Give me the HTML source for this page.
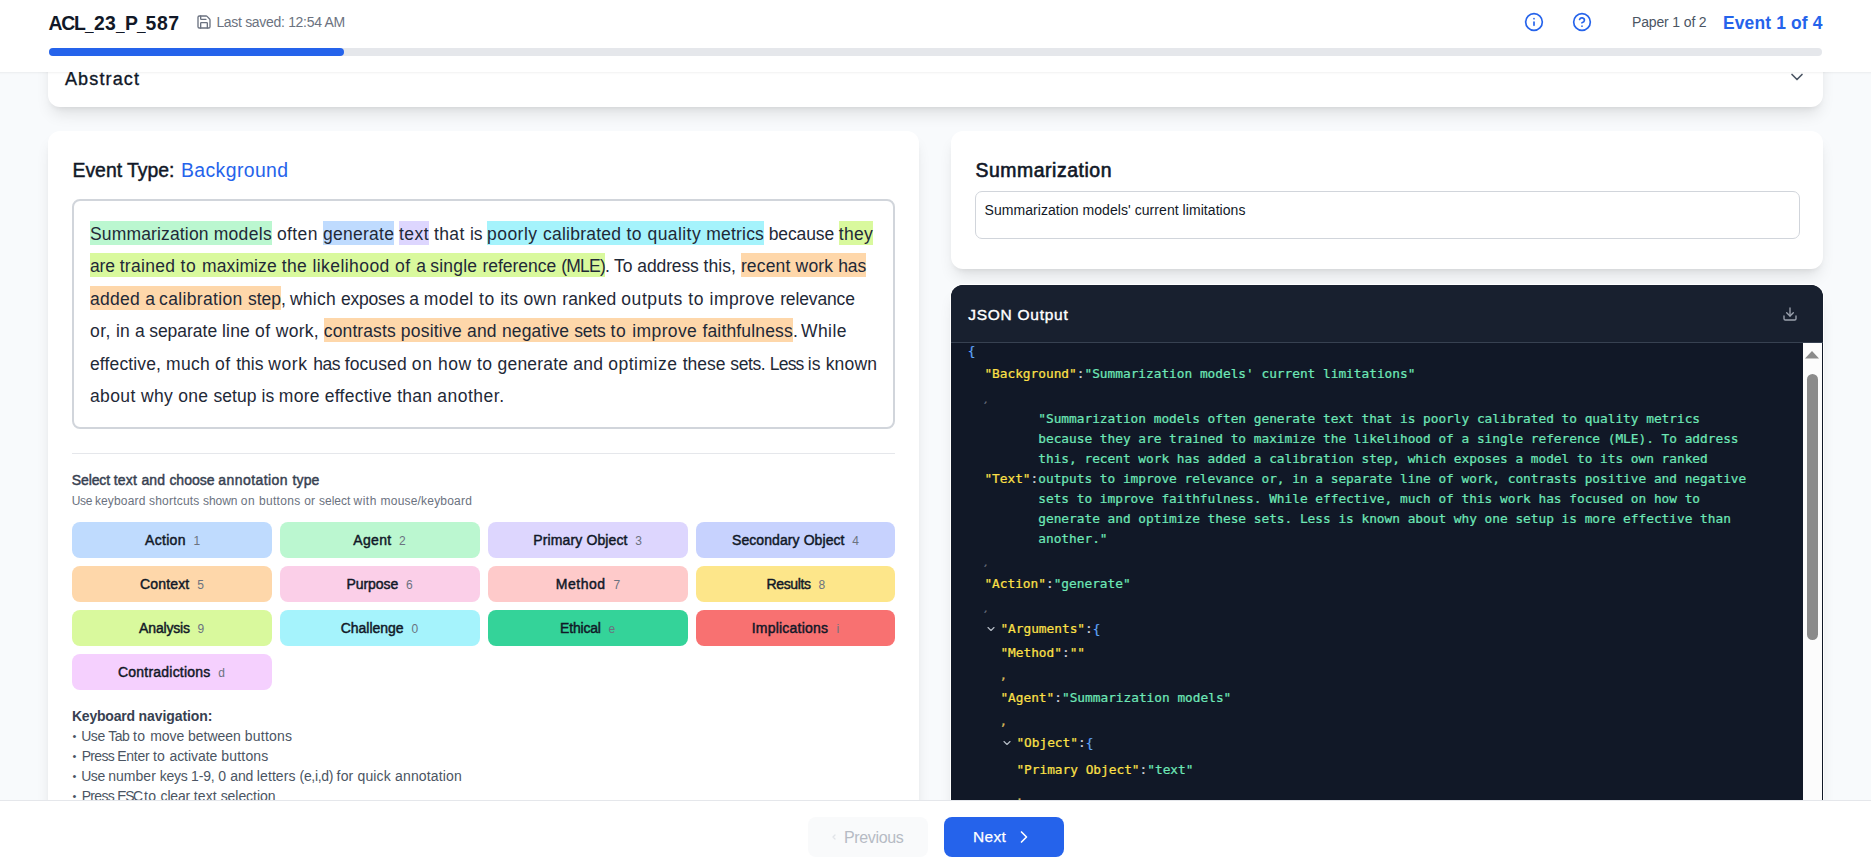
<!DOCTYPE html>
<html lang="en"><head><meta charset="utf-8"><title>Annotation</title><style>
html,body{margin:0;padding:0;overflow:hidden}
body{width:1871px;height:868px;overflow:hidden;background:#f8fafc;font-family:"Liberation Sans",sans-serif;position:relative;color:#111827}
.t{position:absolute;white-space:pre;line-height:1;display:block}
.m{font-family:"DejaVu Sans Mono","Liberation Mono",monospace;-webkit-text-stroke-width:0.22px}
.card{position:absolute;background:#fff;border-radius:12px;box-shadow:0 10px 15px -3px rgba(0,0,0,.1),0 4px 6px -4px rgba(0,0,0,.1)}
.abs{position:absolute}
svg{position:absolute;overflow:visible;fill:none;stroke-linecap:round;stroke-linejoin:round}
.ln{position:absolute;left:90px;display:flex;align-items:center;height:32.4px;font-size:17.5px;white-space:pre;color:#1f2937}
.g{display:flex;height:24px;flex:none}
.g span{display:block;height:24px;line-height:22px;padding-top:2px;box-sizing:border-box;flex:none}
.sb{-webkit-text-stroke:0.032em currentColor}
.btn{position:absolute;height:35.8px;width:199.8px;border-radius:8px}
</style></head><body><div class="card" style="left:48px;top:40px;width:1775px;height:67px"></div><span class="t f" style="left: 64.9px; top: 69.93px; font-size: 18.04px; color: rgb(17, 24, 39); width: 75.3px; -webkit-text-stroke: 0.35px currentcolor; letter-spacing: 1.145px;">Abstract</span><svg style="left:1787px;top:67px" width="20" height="20" viewBox="0 0 24 24" stroke="#4b5563" stroke-width="2"><path d="m6 9 6 6 6-6"></path></svg><div class="card" style="left:48px;top:131px;width:871px;height:760px"></div><span class="t f" style="left: 72.5px; top: 161.38px; font-size: 19.4px; color: rgb(17, 24, 39); width: 102px; -webkit-text-stroke: 0.45px currentcolor; letter-spacing: -0.004px;">Event Type:</span><span class="t f" style="left: 181px; top: 161.38px; font-size: 19.4px; color: rgb(37, 99, 235); width: 107.5px; letter-spacing: 0.4px;">Background</span><div class="abs" style="left:72px;top:199px;width:819px;height:226px;border:2px solid #d1d5db;border-radius:8px;background:#fff"></div><div class="ln" style="top:216.8px"><span class="g" style="background:#bbf7d0"><span class="f" style="width: 123.7px; letter-spacing: 0.152px;">Summarization </span><span class="f" style="width: 58.3px; letter-spacing: 0.313px;">models</span></span><span class="g"><span class="f" style="width: 5px; letter-spacing: 0.125px;"> </span><span class="f" style="width: 46px; letter-spacing: 0.367px;">often </span></span><span class="g" style="background:#bfdbfe"><span class="f" style="width: 71.2px; letter-spacing: 0.263px;">generate</span></span><span class="g"><span class="f" style="width: 4.9px; letter-spacing: 0.025px;"> </span></span><span class="g" style="background:#ddd6fe"><span class="f" style="width: 29.9px; letter-spacing: 0.42px;">text</span></span><span class="g"><span class="f" style="width: 5px; letter-spacing: 0.125px;"> </span><span class="f" style="width: 36.1px; letter-spacing: 0.408px;">that </span><span class="f" style="width: 16.9px; letter-spacing: -0.2px;">is </span></span><span class="g" style="background:#a5f3fc"><span class="f" style="width: 56px; letter-spacing: 0.496px;">poorly </span><span class="f" style="width: 83.5px; letter-spacing: 0.25px;">calibrated </span><span class="f" style="width: 21.1px; letter-spacing: 0.544px;">to </span><span class="f" style="width: 58.8px; letter-spacing: 0.418px;">quality </span><span class="f" style="width: 57.7px; letter-spacing: 0.187px;">metrics</span></span><span class="g"><span class="f" style="width: 4.7px; letter-spacing: -0.175px;"> </span><span class="f" style="width: 70.1px; letter-spacing: -0.116px;">because </span></span><span class="g" style="background:#d9f99d"><span class="f" style="width: 34.3px; letter-spacing: 0.305px;">they</span></span></div><div class="ln" style="top:249.2px"><span class="g" style="background:#d9f99d"><span class="f" style="width: 29.7px; letter-spacing: -0.114px;">are </span><span class="f" style="width: 60.9px; letter-spacing: 0.316px;">trained </span><span class="f" style="width: 21.5px; letter-spacing: 0.677px;">to </span><span class="f" style="width: 79.7px; letter-spacing: 0.104px;">maximize </span><span class="f" style="width: 30.7px; letter-spacing: 0.374px;">the </span><span class="f" style="width: 82.6px; letter-spacing: 0.434px;">likelihood </span><span class="f" style="width: 21.1px; letter-spacing: 0.544px;">of </span><span class="f" style="width: 14px; letter-spacing: -0.305px;">a </span><span class="f" style="width: 52.3px; letter-spacing: 0.244px;">single </span><span class="f" style="width: 78.7px; letter-spacing: -0.01px;">reference </span><span class="f" style="width: 43.9px; letter-spacing: -0.748px;">(MLE)</span></span><span class="g"><span class="f" style="width: 9.1px; letter-spacing: -0.317px;">. </span><span class="f" style="width: 23.2px; letter-spacing: -0.053px;">To </span><span class="f" style="width: 66.2px; letter-spacing: -0.116px;">address </span><span class="f" style="width: 37.4px; letter-spacing: 0.072px;">this, </span></span><span class="g" style="background:#fed7aa"><span class="f" style="width: 54.7px; letter-spacing: 0.171px;">recent </span><span class="f" style="width: 42.7px; letter-spacing: 0.178px;">work </span><span class="f" style="width: 27.8px; letter-spacing: -0.14px;">has</span></span></div><div class="ln" style="top:281.6px"><span class="g" style="background:#fed7aa"><span class="f" style="width: 55.3px; letter-spacing: 0.295px;">added </span><span class="f" style="width: 13.8px; letter-spacing: -0.405px;">a </span><span class="f" style="width: 88.8px; letter-spacing: 0.347px;">calibration </span><span class="f" style="width: 33.1px; letter-spacing: 0.005px;">step</span></span><span class="g"><span class="f" style="width: 8.9px; letter-spacing: -0.417px;">, </span><span class="f" style="width: 51.1px; letter-spacing: 0.248px;">which </span><span class="f" style="width: 68.4px; letter-spacing: -0.206px;">exposes </span><span class="f" style="width: 14.4px; letter-spacing: -0.105px;">a </span><span class="f" style="width: 55.2px; letter-spacing: 0.445px;">model </span><span class="f" style="width: 21.2px; letter-spacing: 0.577px;">to </span><span class="f" style="width: 23.3px; letter-spacing: 0.231px;">its </span><span class="f" style="width: 38.8px; letter-spacing: 0.458px;">own </span><span class="f" style="width: 59.1px; letter-spacing: 0.104px;">ranked </span><span class="f" style="width: 66.9px; letter-spacing: 0.577px;">outputs </span><span class="f" style="width: 21.4px; letter-spacing: 0.644px;">to </span><span class="f" style="width: 70.6px; letter-spacing: 0.436px;">improve </span><span class="f" style="width: 74.6px; letter-spacing: -0.143px;">relevance</span></span></div><div class="ln" style="top:314.0px"><span class="g"><span class="f" style="width: 25.9px; letter-spacing: 0.393px;">or, </span><span class="f" style="width: 19.1px; letter-spacing: 0.205px;">in </span><span class="f" style="width: 14.2px; letter-spacing: -0.205px;">a </span><span class="f" style="width: 72.8px; letter-spacing: -0.019px;">separate </span><span class="f" style="width: 33.1px; letter-spacing: 0.198px;">line </span><span class="f" style="width: 20.8px; letter-spacing: 0.444px;">of </span><span class="f" style="width: 48px; letter-spacing: 0.219px;">work, </span></span><span class="g" style="background:#fed7aa"><span class="f" style="width: 76.9px; letter-spacing: 0.103px;">contrasts </span><span class="f" style="width: 66.2px; letter-spacing: 0.222px;">positive </span><span class="f" style="width: 35px; letter-spacing: 0.234px;">and </span><span class="f" style="width: 72.3px; letter-spacing: 0.141px;">negative </span><span class="f" style="width: 36.2px; letter-spacing: -0.154px;">sets </span><span class="f" style="width: 21.9px; letter-spacing: 0.81px;">to </span><span class="f" style="width: 70.1px; letter-spacing: 0.374px;">improve </span><span class="f" style="width: 90.5px; letter-spacing: 0.164px;">faithfulness</span></span><span class="g"><span class="f" style="width: 8.1px; letter-spacing: -0.817px;">. </span><span class="f" style="width: 45.9px; letter-spacing: 0.427px;">While</span></span></div><div class="ln" style="top:346.4px"><span class="g"><span class="f" style="width: 76.1px; letter-spacing: 0.137px;">effective, </span><span class="f" style="width: 48.9px; letter-spacing: 0.249px;">much </span><span class="f" style="width: 21.3px; letter-spacing: 0.61px;">of </span><span class="f" style="width: 31.9px; letter-spacing: -0.042px;">this </span><span class="f" style="width: 45px; letter-spacing: 0.637px;">work </span><span class="f" style="width: 31.5px; letter-spacing: -0.395px;">has </span><span class="f" style="width: 67.1px; letter-spacing: 0.118px;">focused </span><span class="f" style="width: 26.3px; letter-spacing: 0.657px;">on </span><span class="f" style="width: 39px; letter-spacing: 0.508px;">how </span><span class="f" style="width: 20.5px; letter-spacing: 0.344px;">to </span><span class="f" style="width: 75.6px; letter-spacing: 0.183px;">generate </span><span class="f" style="width: 35.1px; letter-spacing: 0.259px;">and </span><span class="f" style="width: 74.5px; letter-spacing: 0.497px;">optimize </span><span class="f" style="width: 47.6px; letter-spacing: -0.015px;">these </span><span class="f" style="width: 39.4px; letter-spacing: -0.405px;">sets. </span><span class="f" style="width: 37.9px; letter-spacing: -0.786px;">Less </span><span class="f" style="width: 18px; letter-spacing: 0.167px;">is </span><span class="f" style="width: 51.7px; letter-spacing: 0.221px;">known</span></span></div><div class="ln" style="top:378.8px"><span class="g"><span class="f" style="width: 51px; letter-spacing: 0.391px;">about </span><span class="f" style="width: 37.2px; letter-spacing: 0.304px;">why </span><span class="f" style="width: 35.2px; letter-spacing: 0.284px;">one </span><span class="f" style="width: 48.2px; letter-spacing: 0.085px;">setup </span><span class="f" style="width: 17.3px; letter-spacing: -0.067px;">is </span><span class="f" style="width: 45.9px; letter-spacing: 0.233px;">more </span><span class="f" style="width: 72.4px; letter-spacing: 0.268px;">effective </span><span class="f" style="width: 40.2px; letter-spacing: 0.253px;">than </span><span class="f" style="width: 67.2px; letter-spacing: 0.494px;">another.</span></span></div><div class="abs" style="left:72px;top:453.2px;width:823px;height:1px;background:#e5e7eb"></div><span class="t f sb" style="left: 71.8px; top: 473.35px; font-size: 14px; color: rgb(55, 65, 81); width: 41.9px; letter-spacing: -0.13px;">Select </span><span class="t f sb" style="left: 113.7px; top: 473.35px; font-size: 14px; color: rgb(55, 65, 81); width: 27.7px; letter-spacing: 0.246px;">text </span><span class="t f sb" style="left: 141.4px; top: 473.35px; font-size: 14px; color: rgb(55, 65, 81); width: 28px; letter-spacing: 0.188px;">and </span><span class="t f sb" style="left: 169.4px; top: 473.35px; font-size: 14px; color: rgb(55, 65, 81); width: 48.9px; letter-spacing: -0.021px;">choose </span><span class="t f sb" style="left: 218.3px; top: 473.35px; font-size: 14px; color: rgb(55, 65, 81); width: 74.1px; letter-spacing: 0.437px;">annotation </span><span class="t f sb" style="left: 292.4px; top: 473.35px; font-size: 14px; color: rgb(55, 65, 81); width: 27.2px; letter-spacing: 0.183px;">type</span><span class="t f" style="left: 71.8px; top: 494.94px; font-size: 12px; color: rgb(107, 114, 128); width: 23.1px; letter-spacing: -0.397px;">Use </span><span class="t f" style="left: 94.9px; top: 494.94px; font-size: 12px; color: rgb(107, 114, 128); width: 54.1px; letter-spacing: 0.155px;">keyboard </span><span class="t f" style="left: 149px; top: 494.94px; font-size: 12px; color: rgb(107, 114, 128); width: 54.1px; letter-spacing: 0.207px;">shortcuts </span><span class="t f" style="left: 203.1px; top: 494.94px; font-size: 12px; color: rgb(107, 114, 128); width: 37.6px; letter-spacing: -0.072px;">shown </span><span class="t f" style="left: 240.7px; top: 494.94px; font-size: 12px; color: rgb(107, 114, 128); width: 18.3px; letter-spacing: 0.538px;">on </span><span class="t f" style="left: 259px; top: 494.94px; font-size: 12px; color: rgb(107, 114, 128); width: 45.2px; letter-spacing: 0.312px;">buttons </span><span class="t f" style="left: 304.2px; top: 494.94px; font-size: 12px; color: rgb(107, 114, 128); width: 14.8px; letter-spacing: 0.261px;">or </span><span class="t f" style="left: 319px; top: 494.94px; font-size: 12px; color: rgb(107, 114, 128); width: 34.6px; letter-spacing: -0.012px;">select </span><span class="t f" style="left: 353.6px; top: 494.94px; font-size: 12px; color: rgb(107, 114, 128); width: 27px; letter-spacing: 0.463px;">with </span><span class="t f" style="left: 380.6px; top: 494.94px; font-size: 12px; color: rgb(107, 114, 128); width: 91.4px; letter-spacing: 0.192px;">mouse/keyboard</span><div class="btn" style="left:72.00px;top:522.00px;width:199.8px;background:#bfdbfe"></div><span class="t f sb" style="left: 145.1px; top: 533.05px; font-size: 14px; color: rgb(17, 24, 39); width: 40.7px; letter-spacing: 0.296px;">Action</span><span class="t" style="left:193.50px;top:534.74px;font-size:12px;color:#6b7280;">1</span><div class="btn" style="left:280.00px;top:522.00px;width:199.8px;background:#bbf7d0"></div><span class="t f sb" style="left: 353.3px; top: 533.05px; font-size: 14px; color: rgb(17, 24, 39); width: 38.3px; letter-spacing: 0.341px;">Agent</span><span class="t" style="left:399.10px;top:534.74px;font-size:12px;color:#6b7280;">2</span><div class="btn" style="left:488.00px;top:522.00px;width:199.8px;background:#ddd6fe"></div><span class="t f sb" style="left: 533.3px; top: 533.05px; font-size: 14px; color: rgb(17, 24, 39); width: 94.3px; letter-spacing: 0.123px;">Primary Object</span><span class="t" style="left:635.30px;top:534.74px;font-size:12px;color:#6b7280;">3</span><div class="btn" style="left:696.00px;top:522.00px;width:198.9px;background:#c7d2fe"></div><span class="t f sb" style="left: 732px; top: 533.05px; font-size: 14px; color: rgb(17, 24, 39); width: 112.6px; letter-spacing: 0.081px;">Secondary Object</span><span class="t" style="left:852.20px;top:534.74px;font-size:12px;color:#6b7280;">4</span><div class="btn" style="left:72.00px;top:566.00px;width:199.8px;background:#fed7aa"></div><span class="t f sb" style="left: 140px; top: 577.05px; font-size: 14px; color: rgb(17, 24, 39); width: 49.4px; letter-spacing: 0.164px;">Context</span><span class="t" style="left:197.30px;top:578.74px;font-size:12px;color:#6b7280;">5</span><div class="btn" style="left:280.00px;top:566.00px;width:199.8px;background:#fbcfe8"></div><span class="t f sb" style="left: 346.5px; top: 577.05px; font-size: 14px; color: rgb(17, 24, 39); width: 51.7px; letter-spacing: -0.065px;">Purpose</span><span class="t" style="left:406.00px;top:578.74px;font-size:12px;color:#6b7280;">6</span><div class="btn" style="left:488.00px;top:566.00px;width:199.8px;background:#fecaca"></div><span class="t f sb" style="left: 555.8px; top: 577.05px; font-size: 14px; color: rgb(17, 24, 39); width: 49.8px; letter-spacing: 0.516px;">Method</span><span class="t" style="left:613.50px;top:578.74px;font-size:12px;color:#6b7280;">7</span><div class="btn" style="left:696.00px;top:566.00px;width:198.9px;background:#fde68a"></div><span class="t f sb" style="left: 766.5px; top: 577.05px; font-size: 14px; color: rgb(17, 24, 39); width: 44.1px; letter-spacing: -0.37px;">Results</span><span class="t" style="left:818.50px;top:578.74px;font-size:12px;color:#6b7280;">8</span><div class="btn" style="left:72.00px;top:610.00px;width:199.8px;background:#d9f99d"></div><span class="t f sb" style="left: 139.1px; top: 621.05px; font-size: 14px; color: rgb(17, 24, 39); width: 50.8px; letter-spacing: -0.168px;">Analysis</span><span class="t" style="left:197.50px;top:622.74px;font-size:12px;color:#6b7280;">9</span><div class="btn" style="left:280.00px;top:610.00px;width:199.8px;background:#a5f3fc"></div><span class="t f sb" style="left: 340.8px; top: 621.05px; font-size: 14px; color: rgb(17, 24, 39); width: 62.7px; letter-spacing: -0.04px;">Challenge</span><span class="t" style="left:411.50px;top:622.74px;font-size:12px;color:#6b7280;">0</span><div class="btn" style="left:488.00px;top:610.00px;width:199.8px;background:#34d399"></div><span class="t f sb" style="left: 560.1px; top: 621.05px; font-size: 14px; color: rgb(17, 24, 39); width: 40.7px; letter-spacing: -0.19px;">Ethical</span><span class="t" style="left:608.50px;top:622.74px;font-size:12px;color:#6b7280;">e</span><div class="btn" style="left:696.00px;top:610.00px;width:198.9px;background:#f87171"></div><span class="t f sb" style="left: 751.7px; top: 621.05px; font-size: 14px; color: rgb(17, 24, 39); width: 76.6px; letter-spacing: 0.223px;">Implications</span><span class="t" style="left:836.50px;top:622.74px;font-size:12px;color:#6b7280;">i</span><div class="btn" style="left:72.00px;top:654.00px;width:199.8px;background:#f5d0fe"></div><span class="t f sb" style="left: 118px; top: 665.05px; font-size: 14px; color: rgb(17, 24, 39); width: 92.5px; letter-spacing: 0.214px;">Contradictions</span><span class="t" style="left:218.20px;top:666.74px;font-size:12px;color:#6b7280;">d</span><span class="t f" style="left: 71.9px; top: 708.65px; font-size: 14px; font-weight: 700; color: rgb(55, 65, 81); width: 66.7px; letter-spacing: -0.197px;">Keyboard </span><span class="t f" style="left: 138.6px; top: 708.65px; font-size: 14px; font-weight: 700; color: rgb(55, 65, 81); width: 73.7px; letter-spacing: -0.088px;">navigation:</span><span class="t" style="left:72.60px;top:731.29px;font-size:11px;color:#4b5563;">•</span><span class="t f" style="left: 81.2px; top: 728.75px; font-size: 14px; color: rgb(75, 85, 99); width: 27px; letter-spacing: -0.449px;">Use </span><span class="t f" style="left: 108.2px; top: 728.75px; font-size: 14px; color: rgb(75, 85, 99); width: 24.7px; letter-spacing: -0.442px;">Tab </span><span class="t f" style="left: 132.9px; top: 728.75px; font-size: 14px; color: rgb(75, 85, 99); width: 17.3px; letter-spacing: 0.574px;">to </span><span class="t f" style="left: 150.2px; top: 728.75px; font-size: 14px; color: rgb(75, 85, 99); width: 37.7px; letter-spacing: -0.085px;">move </span><span class="t f" style="left: 187.9px; top: 728.75px; font-size: 14px; color: rgb(75, 85, 99); width: 56.9px; letter-spacing: 0.009px;">between </span><span class="t f" style="left: 244.8px; top: 728.75px; font-size: 14px; color: rgb(75, 85, 99); width: 47.4px; letter-spacing: 0.209px;">buttons</span><span class="t" style="left:72.60px;top:751.29px;font-size:11px;color:#4b5563;">•</span><span class="t f" style="left: 81.7px; top: 748.75px; font-size: 14px; color: rgb(75, 85, 99); width: 35.6px; letter-spacing: -0.681px;">Press </span><span class="t f" style="left: 117.3px; top: 748.75px; font-size: 14px; color: rgb(75, 85, 99); width: 35.6px; letter-spacing: -0.293px;">Enter </span><span class="t f" style="left: 152.9px; top: 748.75px; font-size: 14px; color: rgb(75, 85, 99); width: 16.5px; letter-spacing: 0.307px;">to </span><span class="t f" style="left: 169.4px; top: 748.75px; font-size: 14px; color: rgb(75, 85, 99); width: 51.8px; letter-spacing: -0.038px;">activate </span><span class="t f" style="left: 221.2px; top: 748.75px; font-size: 14px; color: rgb(75, 85, 99); width: 47.4px; letter-spacing: 0.209px;">buttons</span><span class="t" style="left:72.60px;top:771.29px;font-size:11px;color:#4b5563;">•</span><span class="t f" style="left: 81.2px; top: 768.75px; font-size: 14px; color: rgb(75, 85, 99); width: 27px; letter-spacing: -0.449px;">Use </span><span class="t f" style="left: 108.2px; top: 768.75px; font-size: 14px; color: rgb(75, 85, 99); width: 51.6px; letter-spacing: 0.034px;">number </span><span class="t f" style="left: 159.8px; top: 768.75px; font-size: 14px; color: rgb(75, 85, 99); width: 31.3px; letter-spacing: -0.277px;">keys </span><span class="t f" style="left: 191.1px; top: 768.75px; font-size: 14px; color: rgb(75, 85, 99); width: 27.2px; letter-spacing: -0.163px;">1-9, </span><span class="t f" style="left: 218.3px; top: 768.75px; font-size: 14px; color: rgb(75, 85, 99); width: 12px; letter-spacing: 0.156px;">0 </span><span class="t f" style="left: 230.3px; top: 768.75px; font-size: 14px; color: rgb(75, 85, 99); width: 26.5px; letter-spacing: -0.188px;">and </span><span class="t f" style="left: 256.8px; top: 768.75px; font-size: 14px; color: rgb(75, 85, 99); width: 42.8px; letter-spacing: 0.098px;">letters </span><span class="t f" style="left: 299.6px; top: 768.75px; font-size: 14px; color: rgb(75, 85, 99); width: 37px; letter-spacing: -0.336px;">(e,i,d) </span><span class="t f" style="left: 336.6px; top: 768.75px; font-size: 14px; color: rgb(75, 85, 99); width: 125.4px; letter-spacing: 0.16px;">for quick annotation</span><span class="t" style="left:72.60px;top:791.29px;font-size:11px;color:#4b5563;">•</span><span class="t f" style="left: 81.7px; top: 788.75px; font-size: 14px; color: rgb(75, 85, 99); width: 35.6px; letter-spacing: -0.681px;">Press </span><span class="t f" style="left: 117.3px; top: 788.75px; font-size: 14px; color: rgb(75, 85, 99); width: 26.8px; letter-spacing: -1.472px;">ESC </span><span class="t f" style="left: 144.1px; top: 788.75px; font-size: 14px; color: rgb(75, 85, 99); width: 16.5px; letter-spacing: 0.307px;">to </span><span class="t f" style="left: 160.6px; top: 788.75px; font-size: 14px; color: rgb(75, 85, 99); width: 33.2px; letter-spacing: -0.172px;">clear </span><span class="t f" style="left: 193.8px; top: 788.75px; font-size: 14px; color: rgb(75, 85, 99); width: 26.9px; letter-spacing: 0.086px;">text </span><span class="t f" style="left: 220.7px; top: 788.75px; font-size: 14px; color: rgb(75, 85, 99); width: 54.7px; letter-spacing: -0.063px;">selection</span><div class="card" style="left:951px;top:131px;width:872px;height:137.6px"></div><span class="t f sb" style="left: 975.5px; top: 161.38px; font-size: 19.4px; color: rgb(17, 24, 39); width: 136.5px; letter-spacing: 0.552px;">Summarization</span><div class="abs" style="left:975px;top:191px;width:822.5px;height:46px;border:1px solid #d1d5db;border-radius:7px;background:#fff"></div><span class="t f" style="left: 984.5px; top: 203.05px; font-size: 14px; color: rgb(17, 24, 39); width: 261px; letter-spacing: 0.057px;">Summarization models' current limitations</span><div class="card" style="left:951.2px;top:285px;width:871.7px;height:600px;background:#111827;overflow:hidden;box-shadow:0 0 0 1px #fff,0 10px 15px -3px rgba(0,0,0,.1),0 4px 6px -4px rgba(0,0,0,.1)"><div class="abs" style="left:0;top:0;width:100%;height:56.8px;background:#18202f;border-bottom:1px solid #374151"></div></div><span class="t f" style="left: 968.2px; top: 306.68px; font-size: 15.5px; color: rgb(255, 255, 255); width: 100.3px; -webkit-text-stroke: 0.4px rgb(255, 255, 255); letter-spacing: 0.737px;">JSON Output</span><svg style="left:1781.6px;top:306px" width="16" height="16" viewBox="0 0 24 24" stroke="#9ca3af" stroke-width="2"><path d="M21 15v4a2 2 0 0 1-2 2H5a2 2 0 0 1-2-2v-4"></path><path d="m7 10 5 5 5-5"></path><path d="M12 15V3"></path></svg><span class="t m" style="left:967.80px;top:345.47px;font-size:12.8px;letter-spacing:-0.009px;"><span style="color:#60a5fa">{</span></span><span class="t m" style="left:984.40px;top:367.67px;font-size:12.8px;letter-spacing:-0.009px;"><span style="color:#fde047">"Background"</span><span style="color:#d1d5db">:</span><span style="color:#6ee7b7">"Summarization models' current limitations"</span></span><span class="t m" style="left:983.60px;top:395.59px;font-size:9px;color:#6b7280;font-style:italic;">,</span><span class="t m" style="left:1038.28px;top:412.67px;font-size:12.8px;letter-spacing:-0.009px;"><span style="color:#6ee7b7">"Summarization models often generate text that is poorly calibrated to quality metrics</span></span><span class="t m" style="left:1038.28px;top:432.67px;font-size:12.8px;letter-spacing:-0.009px;"><span style="color:#6ee7b7">because they are trained to maximize the likelihood of a single reference (MLE). To address</span></span><span class="t m" style="left:1038.28px;top:452.67px;font-size:12.8px;letter-spacing:-0.009px;"><span style="color:#6ee7b7">this, recent work has added a calibration step, which exposes a model to its own ranked</span></span><span class="t m" style="left:1038.28px;top:472.67px;font-size:12.8px;letter-spacing:-0.009px;"><span style="color:#6ee7b7">outputs to improve relevance or, in a separate line of work, contrasts positive and negative</span></span><span class="t m" style="left:1038.28px;top:492.67px;font-size:12.8px;letter-spacing:-0.009px;"><span style="color:#6ee7b7">sets to improve faithfulness. While effective, much of this work has focused on how to</span></span><span class="t m" style="left:1038.28px;top:512.67px;font-size:12.8px;letter-spacing:-0.009px;"><span style="color:#6ee7b7">generate and optimize these sets. Less is known about why one setup is more effective than</span></span><span class="t m" style="left:1038.28px;top:532.67px;font-size:12.8px;letter-spacing:-0.009px;"><span style="color:#6ee7b7">another."</span></span><span class="t m" style="left:984.40px;top:472.67px;font-size:12.8px;letter-spacing:-0.009px;"><span style="color:#fde047">"Text"</span><span style="color:#d1d5db">:</span></span><span class="t m" style="left:983.60px;top:559.09px;font-size:9px;color:#6b7280;font-style:italic;">,</span><span class="t m" style="left:984.40px;top:577.67px;font-size:12.8px;letter-spacing:-0.009px;"><span style="color:#fde047">"Action"</span><span style="color:#d1d5db">:</span><span style="color:#6ee7b7">"generate"</span></span><span class="t m" style="left:983.60px;top:604.99px;font-size:9px;color:#6b7280;font-style:italic;">,</span><svg style="left:985.1px;top:622.8px" width="12" height="12" viewBox="0 0 24 24" stroke="#b4bac4" stroke-width="2.3"><path d="m6 9 6 6 6-6"></path></svg><span class="t m" style="left:1000.40px;top:623.07px;font-size:12.8px;letter-spacing:-0.009px;"><span style="color:#fde047">"Arguments"</span><span style="color:#d1d5db">:</span><span style="color:#60a5fa">{</span></span><span class="t m" style="left:1000.40px;top:647.07px;font-size:12.8px;letter-spacing:-0.009px;"><span style="color:#fde047">"Method"</span><span style="color:#d1d5db">:</span><span style="color:#fde047">""</span></span><span class="t m" style="left:999.60px;top:668.97px;font-size:12.8px;color:#d6b85a;">,</span><span class="t m" style="left:1000.40px;top:691.97px;font-size:12.8px;letter-spacing:-0.009px;"><span style="color:#fde047">"Agent"</span><span style="color:#d1d5db">:</span><span style="color:#6ee7b7">"Summarization models"</span></span><span class="t m" style="left:999.60px;top:714.57px;font-size:12.8px;color:#d6b85a;">,</span><svg style="left:1000.9px;top:736.8px" width="12" height="12" viewBox="0 0 24 24" stroke="#b4bac4" stroke-width="2.3"><path d="m6 9 6 6 6-6"></path></svg><span class="t m" style="left:1016.40px;top:737.07px;font-size:12.8px;letter-spacing:-0.009px;"><span style="color:#fde047">"Object"</span><span style="color:#d1d5db">:</span><span style="color:#60a5fa">{</span></span><span class="t m" style="left:1016.40px;top:763.67px;font-size:12.8px;letter-spacing:-0.009px;"><span style="color:#fde047">"Primary Object"</span><span style="color:#d1d5db">:</span><span style="color:#6ee7b7">"text"</span></span><span class="t m" style="left:1015.60px;top:789.87px;font-size:12.8px;color:#d6b85a;">,</span><div class="abs" style="left:1803px;top:343px;width:18.8px;height:470px;background:#fcfcfc"></div><div class="abs" style="left:1807.1px;top:373.5px;width:10.9px;height:266.3px;border-radius:6px;background:#8b8b8b"></div><svg style="left:1805px;top:351px" width="14" height="8" viewBox="0 0 14 8"><path d="M0 7.5 L7 0 L14 7.5 Z" fill="#8b8b8b" stroke="none"></path></svg><div class="abs" style="left:-20px;top:0;width:1911px;height:72px;background:#fff;box-shadow:0 1px 2px rgba(0,0,0,.06)"></div><span class="t f" style="left: 48.5px; top: 14.08px; font-size: 19.4px; font-weight: 700; color: rgb(17, 24, 39); width: 36.1px; letter-spacing: -1.253px;">ACL</span><span class="t f" style="left: 93.9px; top: 14.08px; font-size: 19.4px; font-weight: 700; color: rgb(17, 24, 39); width: 22.1px; letter-spacing: 0.261px;">23</span><span class="t f" style="left: 125px; top: 14.08px; font-size: 19.4px; font-weight: 700; color: rgb(17, 24, 39); width: 11.9px; letter-spacing: -1.037px;">P</span><span class="t f" style="left: 145.6px; top: 14.08px; font-size: 19.4px; font-weight: 700; color: rgb(17, 24, 39); width: 34px; letter-spacing: 0.547px;">587</span><span class="t" style="left:84.90px;top:14.08px;font-size:19.4px;font-weight:700;color:#111827;transform:scaleX(0.8);transform-origin:0 0;">_</span><span class="t" style="left:116.30px;top:14.08px;font-size:19.4px;font-weight:700;color:#111827;transform:scaleX(0.8);transform-origin:0 0;">_</span><span class="t" style="left:137.20px;top:14.08px;font-size:19.4px;font-weight:700;color:#111827;transform:scaleX(0.8);transform-origin:0 0;">_</span><svg style="left:196px;top:14px" width="16" height="16" viewBox="0 0 24 24" stroke="#6b7280" stroke-width="2"><path d="M15.2 3a2 2 0 0 1 1.4.6l3.8 3.8a2 2 0 0 1 .6 1.4V19a2 2 0 0 1-2 2H5a2 2 0 0 1-2-2V5a2 2 0 0 1 2-2z"></path><path d="M17 21v-7a1 1 0 0 0-1-1H8a1 1 0 0 0-1 1v7"></path><path d="M7 3v4a1 1 0 0 0 1 1h7"></path></svg><span class="t f" style="left: 216.4px; top: 15.45px; font-size: 14px; color: rgb(107, 114, 128); width: 128.4px; letter-spacing: -0.312px;">Last saved: 12:54 AM</span><svg style="left:1524px;top:12px" width="20" height="20" viewBox="0 0 24 24" stroke="#2563eb" stroke-width="2"><circle cx="12" cy="12" r="10"></circle><path d="M12 16v-4"></path><path d="M12 8h.01"></path></svg><svg style="left:1572px;top:12px" width="20" height="20" viewBox="0 0 24 24" stroke="#2563eb" stroke-width="2"><circle cx="12" cy="12" r="10"></circle><path d="M9.09 9a3 3 0 0 1 5.83 1c0 2-3 3-3 3"></path><path d="M12 17h.01"></path></svg><span class="t f" style="left: 1632px; top: 14.95px; font-size: 14px; color: rgb(75, 85, 99); width: 74.5px; letter-spacing: -0.148px;">Paper 1 of 2</span><span class="t f" style="left: 1723px; top: 15.42px; font-size: 17.46px; font-weight: 700; color: rgb(37, 99, 235); width: 99.5px; letter-spacing: 0.135px;">Event 1 of 4</span><div class="abs" style="left:48.6px;top:47.9px;width:1773.6px;height:8.1px;border-radius:4px;background:#e5e7eb"></div><div class="abs" style="left:48.6px;top:47.9px;width:295.7px;height:8.1px;border-radius:4px;background:#2563eb"></div><div class="abs" style="left:0;top:800px;width:1871px;height:68px;background:#fff;border-top:1px solid #e5e7eb"></div><div class="abs" style="left:808px;top:817px;width:120px;height:40px;border-radius:8px;background:#f9fafb"></div><svg style="left:830px;top:833px" width="8" height="8" viewBox="0 0 24 24" stroke="#e1e4e8" stroke-width="4"><path d="m15 18-6-6 6-6"></path></svg><span class="t f" style="left: 844px; top: 829.86px; font-size: 16px; color: rgb(182, 187, 196); width: 59.5px; letter-spacing: -0.344px;">Previous</span><div class="abs" style="left:944px;top:817px;width:120px;height:40px;border-radius:8px;background:#2563eb"></div><span class="t f" style="left: 973px; top: 829.48px; font-size: 15.5px; color: rgb(255, 255, 255); width: 33px; -webkit-text-stroke: 0.25px rgb(255, 255, 255); letter-spacing: 0.281px;">Next</span><svg style="left:1014px;top:827px" width="20" height="20" viewBox="0 0 24 24" stroke="#ffffff" stroke-width="2"><path d="m9 18 6-6-6-6"></path></svg></body></html>
